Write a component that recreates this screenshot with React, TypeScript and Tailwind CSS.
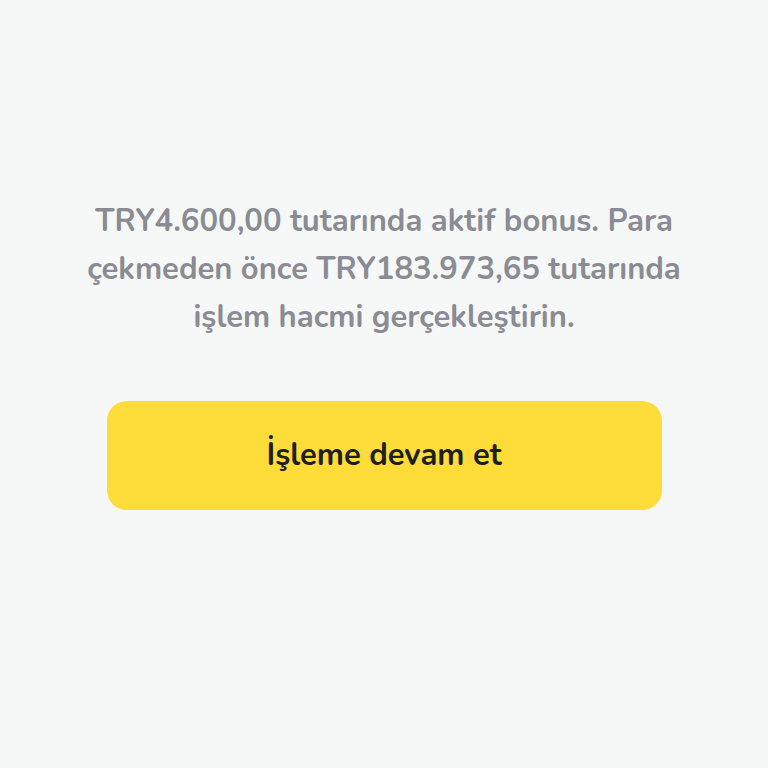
import React from 'react';

const App: React.FC = () => {
  return (
    <div className="w-full h-[768px] bg-[#f6f7f7] flex flex-col items-center font-['Nunito','Lato','Noto_Sans',sans-serif]">
      <p className="mt-[197px] w-[630px] text-center text-[31px] leading-[48px] font-bold text-[#8b8c93]">
        TRY4.600,00 tutarında aktif bonus. Para çekmeden önce TRY183.973,65 tutarında işlem hacmi gerçekleştirin.
      </p>
      <button className="mt-[60px] w-[555px] h-[109px] rounded-[20px] bg-[#fedc3a] text-[31px] font-bold text-[#1f1f1f]">
        İşleme devam et
      </button>
    </div>
  );
};

export default App;
